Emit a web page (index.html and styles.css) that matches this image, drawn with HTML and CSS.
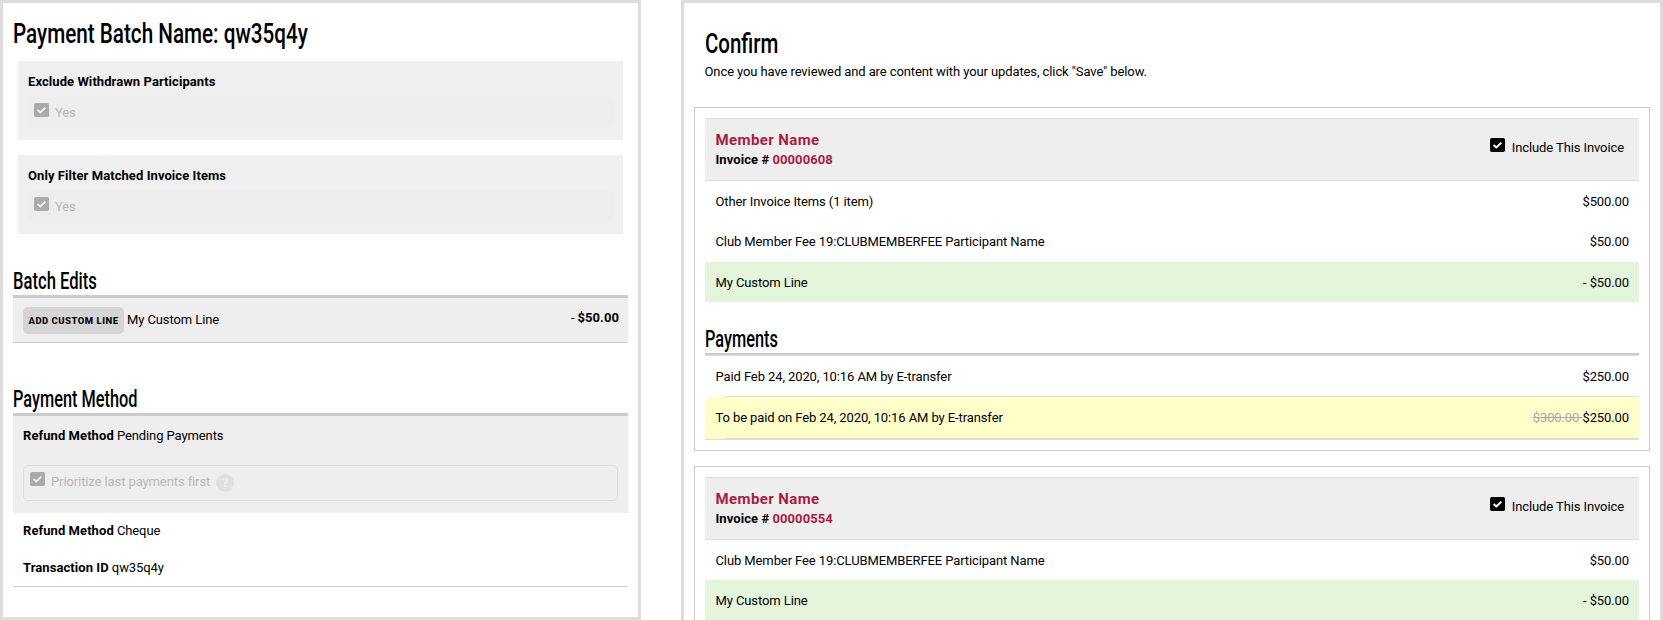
FILE: index.html
```html
<!DOCTYPE html>
<html lang="en">
<head>
<meta charset="utf-8">
<title>Payment Batch</title>
<link rel="stylesheet" href="styles.css">
</head>
<body>
<svg class="defs" width="0" height="0" aria-hidden="true">
  <symbol id="check" viewBox="0 0 15 14">
    <rect class="tick-box" width="15" height="14" rx="1.8"/>
    <path class="tick" d="M3.6 7l2.7 2.5L11.4 4.6" fill="none" stroke-width="2"/>
  </symbol>
</svg>
<main class="columns">
  <section class="panel batch">
    <h1 class="title"><span class="narrow n-title">Payment Batch Name: qw35q4y</span></h1>
    <div class="filter">
      <b class="label">Exclude Withdrawn Participants</b>
      <div class="filter-value"><svg class="check"><use href="#check"/></svg><span>Yes</span></div>
    </div>
    <div class="filter">
      <b class="label">Only Filter Matched Invoice Items</b>
      <div class="filter-value"><svg class="check"><use href="#check"/></svg><span>Yes</span></div>
    </div>
    <h2 class="heading edits"><span class="narrow n-edits">Batch Edits</span></h2>
    <div class="edit-row">
      <button class="add">ADD CUSTOM LINE</button>
      <span class="edit-name">My Custom Line</span>
      <span class="edit-amount">- <b>$50.00</b></span>
    </div>
    <h2 class="heading method"><span class="narrow n-method">Payment Method</span></h2>
    <div class="pending">
      <p class="field"><b>Refund Method</b> Pending Payments</p>
      <div class="priority"><svg class="check"><use href="#check"/></svg><span class="priority-text">Prioritize last payments first</span><span class="help">?</span></div>
    </div>
    <div class="refund">
      <p class="field"><b>Refund Method</b> Cheque</p>
      <p class="field"><b>Transaction ID</b> qw35q4y</p>
    </div>
  </section>
  <section class="panel confirm">
    <h1 class="title"><span class="narrow n-confirm">Confirm</span></h1>
    <p class="intro">Once you have reviewed and are content with your updates, click "Save" below.</p>
    <article class="invoice">
      <header class="invoice-head">
        <div><div class="member">Member Name</div><div class="number"><b>Invoice # <span class="red">00000608</span></b></div></div>
        <label class="include"><svg class="check"><use href="#check"/></svg><span class="include-text">Include This Invoice</span></label>
      </header>
      <div class="line first"><span>Other Invoice Items (1 item)</span><span>$500.00</span></div>
      <div class="line fee"><span>Club Member Fee 19:CLUBMEMBERFEE Participant Name</span><span>$50.00</span></div>
      <div class="line custom"><span>My Custom Line</span><span>- $50.00</span></div>
      <h2 class="heading payments"><span class="narrow n-payments">Payments</span></h2>
      <div class="payment"><span>Paid Feb 24, 2020, 10:16 AM by E-transfer</span><span>$250.00</span></div>
      <div class="payment due"><span>To be paid on Feb 24, 2020, 10:16 AM by E-transfer</span><span><s>$300.00 </s>$250.00</span></div>
    </article>
    <article class="invoice">
      <header class="invoice-head">
        <div><div class="member">Member Name</div><div class="number"><b>Invoice # <span class="red">00000554</span></b></div></div>
        <label class="include"><svg class="check"><use href="#check"/></svg><span class="include-text">Include This Invoice</span></label>
      </header>
      <div class="line"><span>Club Member Fee 19:CLUBMEMBERFEE Participant Name</span><span>$50.00</span></div>
      <div class="line custom"><span>My Custom Line</span><span>- $50.00</span></div>
    </article>
  </section>
</main>
</body>
</html>
```
FILE: styles.css
```css
* { box-sizing: border-box; }
body { margin: 0; background: #fff; color: #000; font: 13px/20px Roboto, sans-serif; letter-spacing: -0.1px; overflow: hidden; }
h1, h2, p { margin: 0; font-weight: 500; letter-spacing: 0; }
p { font-weight: 400; letter-spacing: -0.1px; }
b { font-weight: 700; letter-spacing: 0.07px; }
.defs { display: block; }
.columns { display: grid; grid-template-columns: 641px 982px; column-gap: 40px; height: 620px; overflow: hidden; }
.panel { border: 3px solid #ddd; }
.narrow { display: inline-block; transform-origin: 0 50%; white-space: nowrap; }
.title { font-size: 28px; line-height: 40px; }
.n-title { transform: scaleX(0.738); }
.n-confirm { transform: scaleX(0.731); }
.heading { padding-top: 2px; font-size: 24px; line-height: 28px; border-bottom: 3px solid #ccc; }
.n-edits { transform: scaleX(0.692); }
.n-method, .n-payments { transform: scaleX(0.68); }
.check { width: 15px; height: 14px; flex: none; fill: #000; stroke: #fff; }
.tick-box { stroke: none; }

.batch { height: 620px; padding: 11px 10px 0; }
.filter { height: 79px; margin: 7px 5px 15px; padding: 11px 10px 10px; background: #efefef; }
.filter + .filter { margin-top: 0; }
.label { display: block; }
.filter-value { display: flex; gap: 6px; height: 30px; margin-top: 5px; padding: 6px; background: #ededed; border-radius: 3px; color: #b8b8b8; }
.filter-value .check, .priority .check { fill: #aaa; stroke: #eee; }
.edits { margin-top: 31px; }
.edit-row { display: flex; height: 45px; padding: 9px 9px 0 10px; background: #eee; border-bottom: 1px solid #ccc; }
.add { width: 101px; height: 27px; padding: 0; border: 0; border-radius: 5px; background: #d5d5d5; font: 800 9.5px/27px Roboto, sans-serif; letter-spacing: 0.5px; color: #000; white-space: nowrap; }
.edit-name { margin: 3px auto 0 3px; }
.edit-amount { margin-top: 1px; }
.method { margin-top: 40px; }
.pending { height: 97px; padding: 10px; background: #eee; }
.priority { display: flex; height: 36px; margin-top: 19px; padding: 6px; border: 1px solid #ddd; border-radius: 5px; color: #b8b8b8; }
.priority-text { margin: 0 6px; }
.help { width: 18px; height: 18px; margin-top: 2px; border-radius: 50%; background: #e0e0e0; color: #eee; font-weight: 700; line-height: 18px; text-align: center; }
.refund { display: flex; flex-direction: column; gap: 17px; height: 74px; padding: 8px 10px 0; border-bottom: 1px solid #ccc; }

.confirm { height: 640px; padding: 21px 10px 0; }
.confirm .title, .intro { margin-left: 10.5px; }
.intro { margin-bottom: 25px; margin-top: -2px; }
.invoice { margin-bottom: 15px; padding: 10px; border: 1px solid #ccc; }
.invoice-head { display: flex; justify-content: space-between; height: 63px; padding: 11px 15px 0 10.5px; background: #eee; border: solid #ddd; border-width: 1px 0; }
.member { color: #a81c42; font-size: 15px; font-weight: 700; letter-spacing: 0.4px; line-height: 20px; }
.red { color: #a81c42; }
.include { display: flex; gap: 6.5px; padding-top: 8px; }
.line { display: flex; justify-content: space-between; height: 40px; padding: 11px 10px 0 10.5px; }
.line.first { height: 41px; }
.line.fee { padding-top: 10px; }
.line.custom { background: #e4f5db; }
.payments { margin-top: 21px; border-bottom-width: 2px; }
.payment { position: relative; display: flex; justify-content: space-between; height: 42px; padding: 11px 10px 0 10.5px; border-top: 1px solid #ddd; }
.payment::after { content: ""; position: absolute; left: 20px; right: 0; bottom: 0; height: 1px; background: #ddd; }
.payment + .payment { border-top: 0; }
.due { height: 43px; background: #ffffca; border-bottom: 1px solid #ddd; }
.due s { color: #aaa; }
```
